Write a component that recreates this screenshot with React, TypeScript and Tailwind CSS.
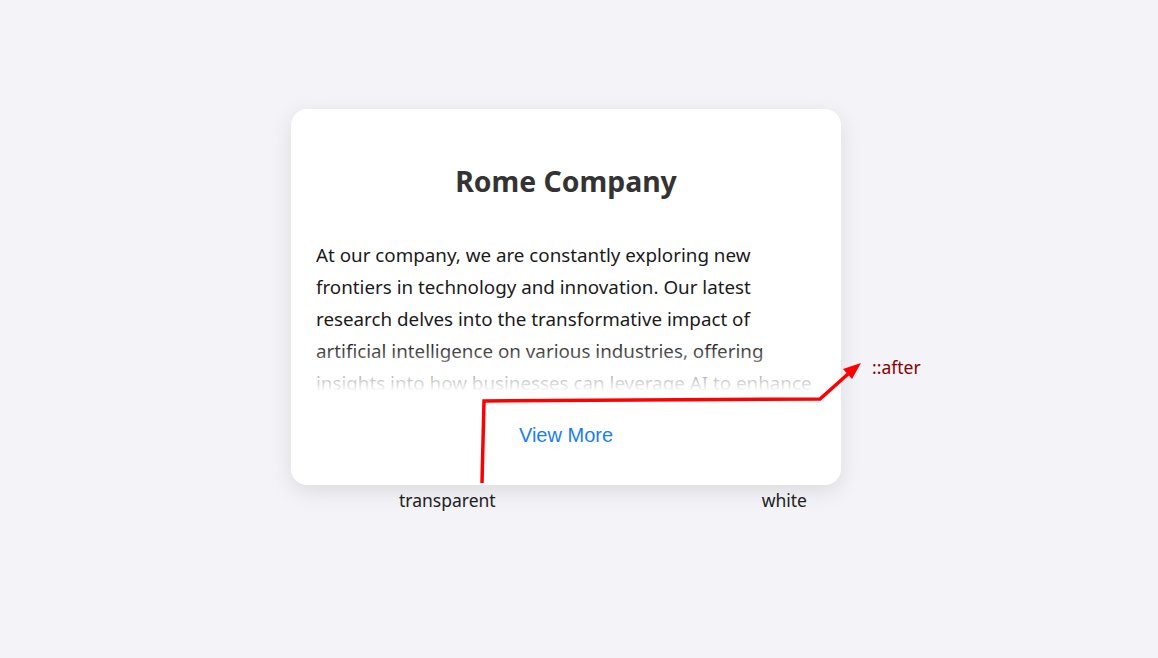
import React from "react";

const lines = [
  "At our company, we are constantly exploring new",
  "frontiers in technology and innovation. Our latest",
  "research delves into the transformative impact of",
  "artificial intelligence on various industries, offering",
  "insights into how businesses can leverage AI to enhance",
];

export default function App() {
  return (
    <div
      className="relative min-h-[658px] w-full bg-[#f3f3f8] pl-[291px] pt-[109px]"
      style={{ fontFamily: '"Noto Sans", "Open Sans", sans-serif' }}
    >
      <div className="relative w-[550px] rounded-[16px] bg-white px-[25px] pb-[36px] pt-[51px] shadow-[0_6px_22px_rgba(0,0,0,0.10)]">
        <h2 className="text-center text-[28.4px] font-bold leading-[42px] text-[#333333]">
          Rome Company
        </h2>
        <div className="relative mt-[37px] h-[153px] overflow-hidden text-[18.8px] leading-[32px] text-[#1a1a1a]">
          {lines.map((l) => (
            <div key={l} className="whitespace-nowrap">
              {l}
            </div>
          ))}
          <div className="absolute bottom-0 left-0 right-0 h-[50px] bg-gradient-to-b from-transparent to-white" />
        </div>
        <div className="mt-[29px] flex justify-center">
          <button
            className="text-[20px] leading-[28px] text-[#1a7ef7]"
            style={{ fontFamily: '"Liberation Sans", Arial, sans-serif' }}
          >
            View More
          </button>
        </div>
      </div>

      <div className="flex w-[550px] pt-[2px] text-[17.5px] leading-[26px] text-[#222]">
        <span className="ml-[108px]">transparent</span>
        <span className="ml-auto mr-[34px]">white</span>
      </div>

      <span className="absolute left-[872px] top-[354px] text-[17.5px] leading-[26px] text-[#8b0000]">
        ::after
      </span>

      <svg
        className="pointer-events-none absolute left-0 top-0"
        width="1158"
        height="658"
        viewBox="0 0 1158 658"
      >
        <polyline
          points="482,483 484,401 820,399 848,374"
          fill="none"
          stroke="#ff0000"
          strokeWidth="3.5"
          strokeLinejoin="miter"
        />
        <polygon points="861,363 843,369 852,379" fill="#ff0000" />
      </svg>
    </div>
  );
}
